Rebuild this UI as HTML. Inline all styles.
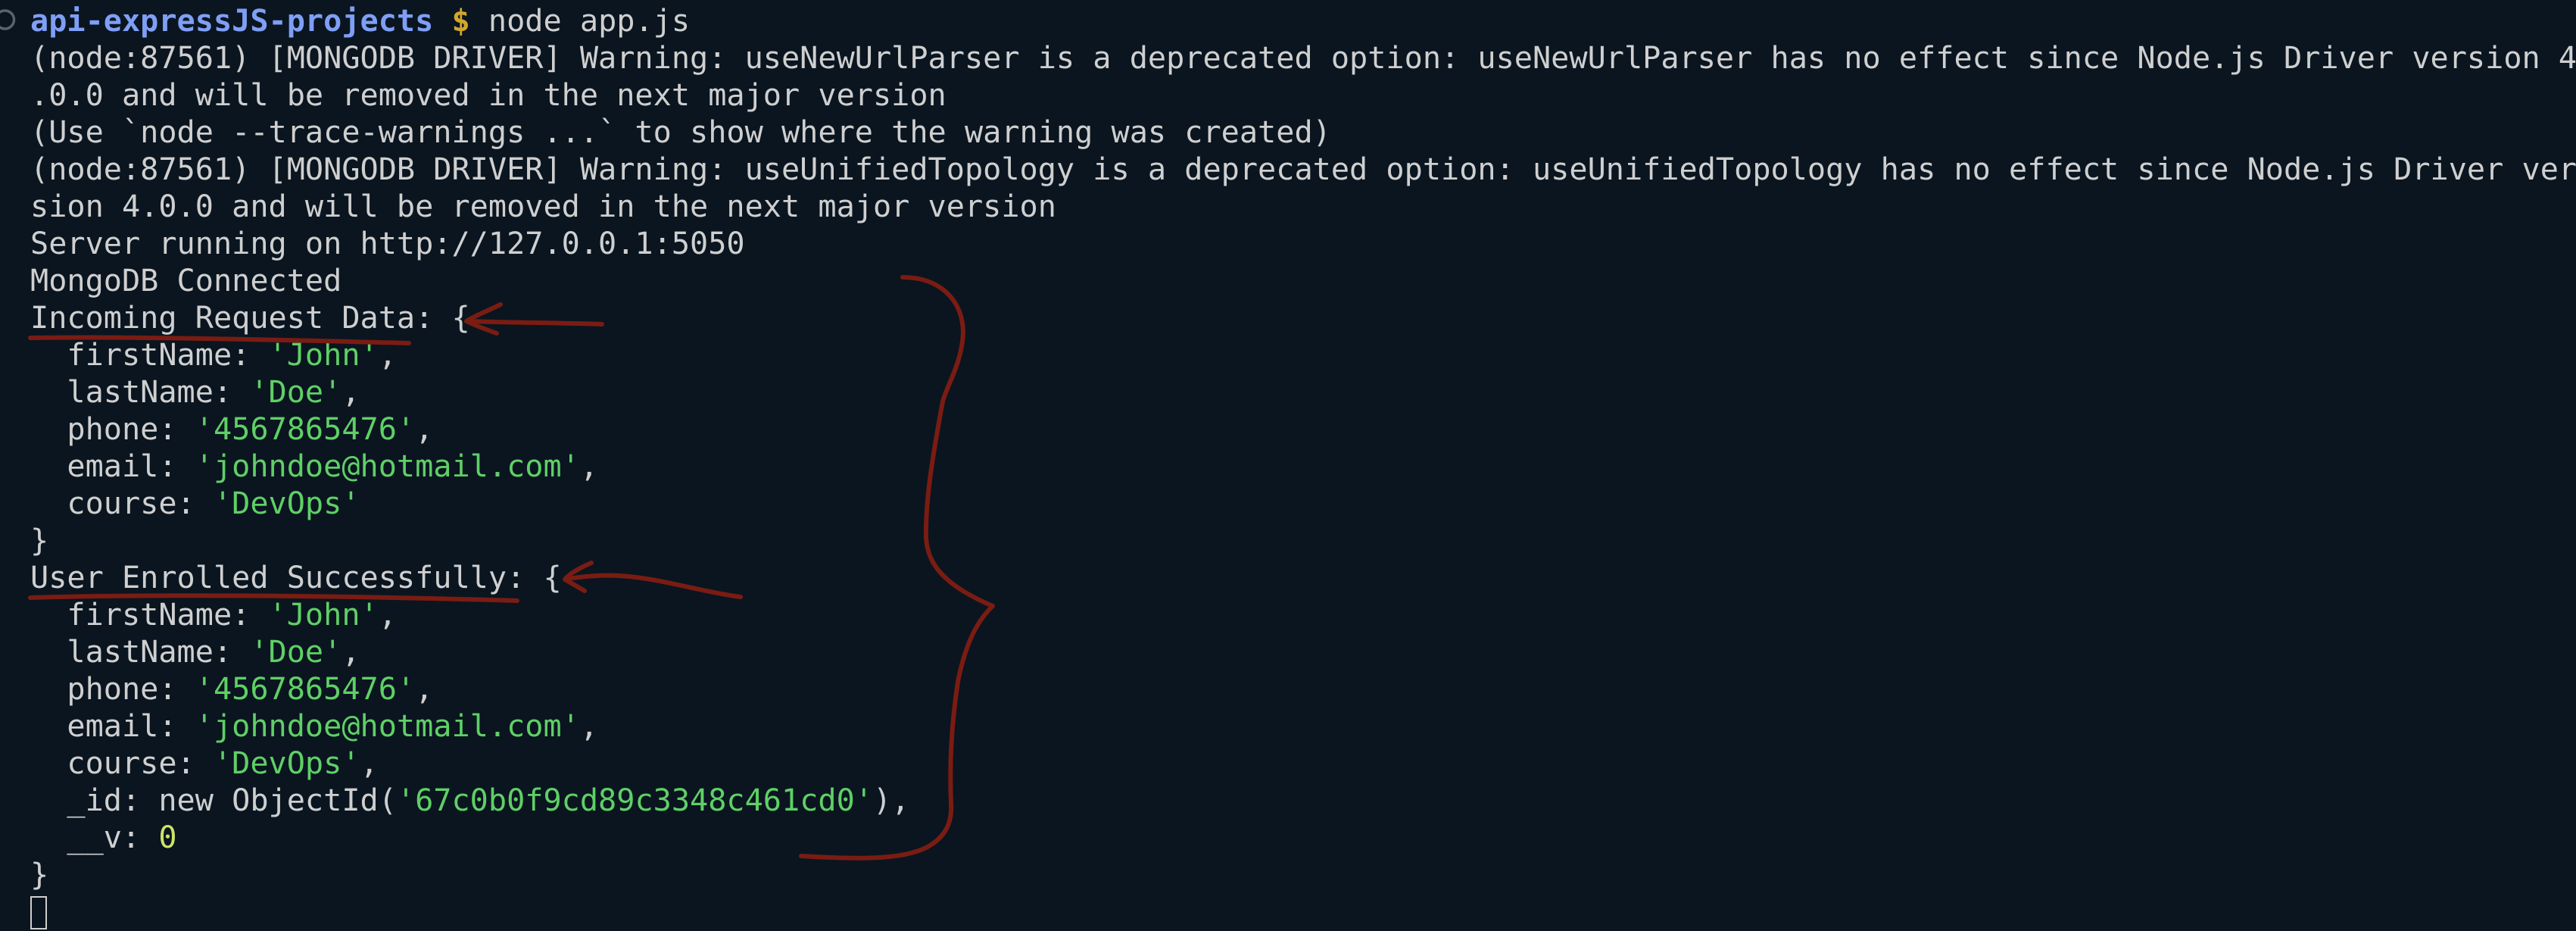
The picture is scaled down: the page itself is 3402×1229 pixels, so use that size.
<!DOCTYPE html>
<html><head><meta charset="utf-8"><style>
html,body{margin:0;padding:0;background:#0a1520;width:3402px;height:1206px;overflow:hidden;}
pre{position:absolute;left:40px;top:4px;margin:0;font-family:"DejaVu Sans Mono","Liberation Mono",monospace;font-size:40.2px;line-height:49px;color:#cfcfcf;white-space:pre;}
.b{color:#7f9ff6;font-weight:bold}.y{color:#d2a62a;font-weight:bold}.g{color:#5fd066}.z{color:#cce36a}
.cur{display:inline-block;width:22px;height:44px;border:2px solid #cfcfcf;box-sizing:border-box;vertical-align:-10px}
svg{position:absolute;left:0;top:0}
</style></head><body>
<pre><span class="b">api-expressJS-projects</span> <span class="y">$</span> node app.js
(node:87561) [MONGODB DRIVER] Warning: useNewUrlParser is a deprecated option: useNewUrlParser has no effect since Node.js Driver version 4
.0.0 and will be removed in the next major version
(Use `node --trace-warnings ...` to show where the warning was created)
(node:87561) [MONGODB DRIVER] Warning: useUnifiedTopology is a deprecated option: useUnifiedTopology has no effect since Node.js Driver ver
sion 4.0.0 and will be removed in the next major version
Server running on http://127.0.0.1:5050
MongoDB Connected
Incoming Request Data: {
  firstName: <span class="g">'John'</span>,
  lastName: <span class="g">'Doe'</span>,
  phone: <span class="g">'4567865476'</span>,
  email: <span class="g">'johndoe@hotmail.com'</span>,
  course: <span class="g">'DevOps'</span>
}
User Enrolled Successfully: {
  firstName: <span class="g">'John'</span>,
  lastName: <span class="g">'Doe'</span>,
  phone: <span class="g">'4567865476'</span>,
  email: <span class="g">'johndoe@hotmail.com'</span>,
  course: <span class="g">'DevOps'</span>,
  _id: new ObjectId(<span class="g">'67c0b0f9cd89c3348c461cd0'</span>),
  __v: <span class="z">0</span>
}
<span class="cur"></span></pre>
<svg width="3402" height="1206" viewBox="0 0 3402 1206" fill="none" stroke-linecap="round" stroke-linejoin="round">
<circle cx="6.5" cy="26" r="12" stroke="#5a626a" stroke-width="3.5"/>
<g stroke="#7a1c12" stroke-width="6">
<path d="M40 446 C150 444 350 448 540 453"/>
<path d="M661 402 C640 412 625 418 616 424 C628 430 645 436 656 440"/>
<path d="M620 424 C680 426 740 426 795 428"/>
<path d="M40 789 C200 784 450 786 683 793"/>
<path d="M781 743 C765 750 752 757 746 765 C755 770 765 776 772 780"/>
<path d="M750 764 C790 758 820 758 860 765 C900 772 940 783 978 788"/>
<path d="M1192 366 C1240 366 1272 395 1272 440 C1270 480 1250 510 1245 530 C1232 600 1222 660 1223 710 C1225 740 1240 770 1311 800 C1290 820 1275 850 1265 900 C1256 960 1254 1010 1256 1060 C1258 1090 1245 1105 1230 1115 C1200 1135 1140 1135 1058 1130"/>
</g>
</svg>
</body></html>
